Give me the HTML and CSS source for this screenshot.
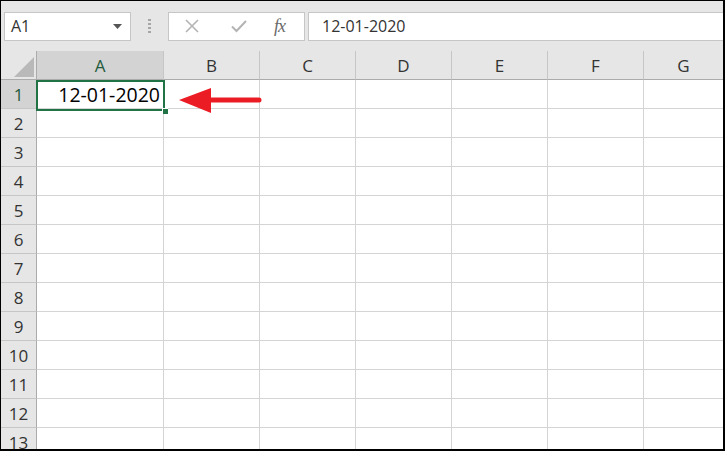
FILE: index.html
```html
<!DOCTYPE html>
<html lang="en">
<head>
  <meta charset="UTF-8" />
  <title>Sheet1 - Excel</title>
  <link rel="stylesheet" href="styles.css">
</head>
<body>
  <div class="window">
    <div class="toolbar">
      <div class="namebox">
        <span>A1</span>
        <svg class="caret" width="9" height="5" viewBox="0 0 9 5"><path d="M0 0h9L4.5 5z" fill="#555"/></svg>
      </div>
      <div class="grip"><i></i><i></i><i></i><i></i></div>
      <div class="fxbuttons">
        <svg width="16" height="16" viewBox="0 0 16 16"><path d="M2 2l12 12M14 2L2 14" stroke="#b4b4b4" stroke-width="1.6" fill="none"/></svg>
        <svg width="18" height="16" viewBox="0 0 18 16"><path d="M2 8.5l4.5 4.5L16 3" stroke="#b4b4b4" stroke-width="2" fill="none"/></svg>
        <span class="fx">fx</span>
      </div>
      <div class="formula">12-01-2020</div>
    </div>

    <div class="sheet">
      <div class="corner"><span class="tri"></span></div>
      <div class="colhead active">A</div>
      <div class="colhead">B</div>
      <div class="colhead">C</div>
      <div class="colhead">D</div>
      <div class="colhead">E</div>
      <div class="colhead">F</div>
      <div class="colhead last">G</div>

      <div class="rowhead active">1</div>
      <div class="cell value">12-01-2020</div>
      <div class="cell"></div><div class="cell"></div><div class="cell"></div><div class="cell"></div><div class="cell"></div><div class="cell last"></div>
    </div>

    <div class="selection"><span class="handle"></span></div>
    <svg class="arrow" width="84" height="30" viewBox="0 0 84 30">
      <path d="M0 13L32 1V10.5H80a2.5 2.5 0 0 1 0 5H32V26z" fill="#ec1c24"/>
    </svg>
  </div>

  <script>
    const sheet = document.querySelector(".sheet");
    for (let r = 2; r <= 13; r++) {
      let row = `<div class="rowhead">${r}</div>`;
      for (let c = 0; c < 7; c++) {
        row += `<div class="cell${c === 6 ? " last" : ""}"></div>`;
      }
      sheet.insertAdjacentHTML("beforeend", row);
    }
  </script>
</body>
</html>
```

FILE: styles.css
```css
html, body {
  margin: 0;
  padding: 0;
}
body {
  font-family: "Open Sans", "Noto Sans", sans-serif;
  color: #333;
  background: #fff;
}
.window {
  position: relative;
  width: 725px;
  height: 451px;
  box-sizing: border-box;
  border: 1px solid #000;
  border-right-width: 2px;
  border-bottom-width: 2px;
  overflow: hidden;
  background: #fff;
}
.toolbar {
  display: flex;
  align-items: center;
  height: 50px;
  padding-left: 3px;
  background: #e6e6e6;
}
.namebox {
  display: flex;
  align-items: center;
  justify-content: space-between;
  box-sizing: border-box;
  width: 127px;
  height: 29px;
  padding: 0 8px 0 6px;
  background: #fff;
  border: 1px solid #c6c6c6;
  font-size: 16px;
  color: #333;
}
.caret {
  margin-top: 1px;
}
.grip {
  display: flex;
  flex-direction: column;
  gap: 2px;
  margin: 0 17px;
}
.grip i {
  display: block;
  width: 3px;
  height: 2px;
  background: #a6a6a6;
}
.fxbuttons {
  display: flex;
  align-items: center;
  box-sizing: border-box;
  width: 137px;
  height: 29px;
  padding-left: 15px;
  background: #fff;
  border: 1px solid #c6c6c6;
}
.fxbuttons svg:nth-child(2) {
  margin-left: 30px;
}
.fx {
  margin-left: 26px;
  font-family: "Liberation Serif", serif;
  font-style: italic;
  font-size: 18px;
  color: #6a6a6a;
  letter-spacing: -1px;
}
.formula {
  flex: 1;
  box-sizing: border-box;
  height: 29px;
  margin-left: 3px;
  padding: 2px 13px;
  background: #fff;
  border: 1px solid #c6c6c6;
  border-right: none;
  font-size: 16px;
  color: #333;
}
.sheet {
  display: grid;
  grid-template-columns: 36px 127px repeat(5, 96px) 1fr;
  grid-auto-rows: 29px;
}
.corner {
  position: relative;
  background: #e6e6e6;
  border-right: 1px solid #ababab;
  border-bottom: 1px solid #ababab;
}
.tri {
  position: absolute;
  right: 2px;
  bottom: 2px;
  width: 0;
  height: 0;
  border-left: 20px solid transparent;
  border-bottom: 20px solid #b9b9b9;
}
.colhead {
  display: flex;
  align-items: center;
  justify-content: center;
  background: #e6e6e6;
  border-right: 1px solid #c6c6c6;
  border-bottom: 1px solid #ababab;
  font-size: 17px;
  color: #333;
}
.colhead.last {
  border-right: none;
}
.rowhead {
  display: flex;
  align-items: center;
  justify-content: center;
  background: #e6e6e6;
  border-right: 1px solid #ababab;
  border-bottom: 1px solid #c6c6c6;
  font-size: 17px;
  color: #333;
}
.colhead.active,
.rowhead.active {
  background: #d3d3d3;
  color: #1f5a3a;
}
.cell {
  border-right: 1px solid #d4d4d4;
  border-bottom: 1px solid #d4d4d4;
}
.cell.last {
  border-right: none;
}
.value {
  display: flex;
  align-items: center;
  justify-content: flex-end;
  padding-right: 3px;
  font-size: 19.5px;
  color: #000;
}
.selection {
  position: absolute;
  left: 35px;
  top: 79px;
  width: 125px;
  height: 27px;
  border: 2px solid #217346;
}
.handle {
  position: absolute;
  right: -5px;
  bottom: -5px;
  width: 5px;
  height: 5px;
  background: #217346;
  border: 1px solid #fff;
  border-right: none;
  border-bottom: none;
}
.arrow {
  position: absolute;
  left: 178px;
  top: 86px;
}
```
